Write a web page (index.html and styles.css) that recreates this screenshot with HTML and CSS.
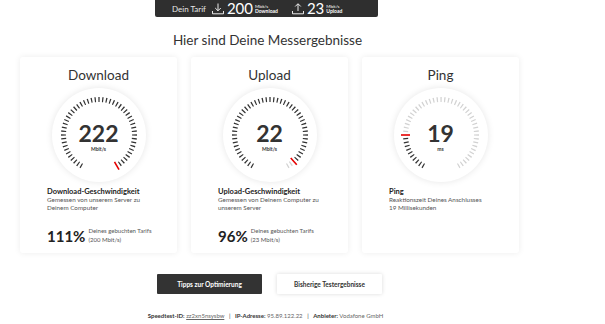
FILE: index.html
```html
<!DOCTYPE html>
<html lang="de">
<head>
    <meta charset="UTF-8">
    <meta name="viewport" content="width=device-width, initial-scale=1.0">
    <title>Speedtest Ergebnisse</title>
    <link rel="stylesheet" href="styles.css">
</head>
<body>
    <div class="page">
        <div class="tariff-bar">
            <span class="tariff-label">Dein Tarif</span>
            <svg class="tariff-icon" viewBox="0 0 14 14" width="14" height="14">
                <path d="M7 1.5v7M4.2 6l2.8 2.8L9.8 6M1.5 9v2.8h11V9" fill="none" stroke="#fff" stroke-width="0.9"/>
            </svg>
            <span class="tariff-value">200</span>
            <span class="tariff-unit"><span>Mbit/s</span><b>Download</b></span>
            <svg class="tariff-icon upload" viewBox="0 0 14 14" width="14" height="14">
                <path d="M7 9V2M4.2 4.5L7 1.7l2.8 2.8M1.5 9v2.8h11V9" fill="none" stroke="#fff" stroke-width="0.9"/>
            </svg>
            <span class="tariff-value">23</span>
            <span class="tariff-unit"><span>Mbit/s</span><b>Upload</b></span>
        </div>

        <h2 class="title">Hier sind Deine Messergebnisse</h2>

        <div class="cards">
            <div class="card">
                <h3>Download</h3>
                <div class="gauge">
                    <svg class="ticks" viewBox="0 0 94 94" width="94" height="94">
                        <path class="tick-dark" d="M29.79 78.05 A35.5 35.5 0 1 1 67.36 76.08" pathLength="296"/>
                        <line class="tick-red" x1="47" y1="16" x2="47" y2="7" transform="rotate(150 47 47)"/>
                    </svg>
                    <div class="gauge-value">222</div>
                    <div class="gauge-unit">Mbit/s</div>
                </div>
                <div class="info">
                    <div class="info-title">Download-Geschwindigkeit</div>
                    <div class="info-text">Gemessen von unserem Server zu<br>Deinem Computer</div>
                </div>
                <div class="percent">
                    <span class="percent-value">111%</span>
                    <span class="percent-text">Deines gebuchten Tarifs<br>(200 Mbit/s)</span>
                </div>
            </div>

            <div class="card">
                <h3>Upload</h3>
                <div class="gauge">
                    <svg class="ticks" viewBox="0 0 94 94" width="94" height="94">
                        <path class="tick-dark" d="M29.79 78.05 A35.5 35.5 0 1 1 72.96 71.21" pathLength="284"/>
                        <path class="tick-light" d="M68.36 75.35 A35.5 35.5 0 0 1 64.21 78.05" pathLength="8"/>
                        <line class="tick-red" x1="47" y1="16" x2="47" y2="7" transform="rotate(138 47 47)"/>
                    </svg>
                    <div class="gauge-value">22</div>
                    <div class="gauge-unit">Mbit/s</div>
                </div>
                <div class="info">
                    <div class="info-title">Upload-Geschwindigkeit</div>
                    <div class="info-text">Gemessen von Deinem Computer zu<br>unserem Server</div>
                </div>
                <div class="percent">
                    <span class="percent-value">96%</span>
                    <span class="percent-text">Deines gebuchten Tarifs<br>(23 Mbit/s)</span>
                </div>
            </div>

            <div class="card">
                <h3>Ping</h3>
                <div class="gauge">
                    <svg class="ticks" viewBox="0 0 94 94" width="94" height="94">
                        <path class="tick-dark" d="M29.79 78.05 A35.5 35.5 0 0 1 11.63 50.09" pathLength="56"/>
                        <path class="tick-light" d="M11.63 43.91 A35.5 35.5 0 1 1 64.21 78.05" pathLength="236"/>
                        <line class="tick-red" x1="47" y1="16" x2="47" y2="7" transform="rotate(-90 47 47)"/>
                    </svg>
                    <div class="gauge-value">19</div>
                    <div class="gauge-unit">ms</div>
                </div>
                <div class="info">
                    <div class="info-title">Ping</div>
                    <div class="info-text">Reaktionszeit Deines Anschlusses<br>19 Millisekunden</div>
                </div>
            </div>
        </div>

        <div class="actions">
            <button class="btn btn-dark">Tipps zur Optimierung</button>
            <button class="btn btn-light">Bisherige Testergebnisse</button>
        </div>

        <p class="meta">
            <b>Speedtest-ID:</b> <u>zz2xn5nsysbw</u>
            <span class="sep">|</span>
            <b>IP-Adresse:</b> 95.89.122.22
            <span class="sep">|</span>
            <b>Anbieter:</b> Vodafone GmbH
        </p>
    </div>
</body>
</html>
```

FILE: styles.css
```css
body {
    font-family: Lato, "Open Sans", Arial, sans-serif;
    background-color: #ffffff;
    color: #333333;
    margin: 0;
}
.page {
    width: 499px;
    margin-left: 20px;
}
.tariff-bar {
    display: flex;
    align-items: center;
    width: 223px;
    height: 17px;
    margin-left: 135px;
    padding-left: 17px;
    box-sizing: border-box;
    background-color: #2f2f2f;
    border-radius: 0 0 2px 2px;
    color: #ffffff;
}
.tariff-label {
    font-size: 8px;
    color: #e6e6e6;
    margin-right: 5px;
}
.tariff-icon {
    width: 14px;
    height: 14px;
    margin-right: 2px;
}
.tariff-icon.upload {
    margin-left: 13px;
}
.tariff-value {
    font-size: 15px;
    line-height: 17px;
    margin-right: 2px;
}
.tariff-unit {
    display: flex;
    flex-direction: column;
    font-size: 4.5px;
    line-height: 5px;
}
.tariff-unit b {
    font-size: 5px;
}
.title {
    margin: 14px 0 8px;
    font-size: 13.5px;
    line-height: 18px;
    font-weight: 400;
    text-align: center;
    padding-right: 4px;
}
.cards {
    display: grid;
    grid-template-columns: repeat(3, 157px);
    gap: 14px;
}
.card {
    height: 196px;
    box-sizing: border-box;
    padding: 9px 27px 0;
    border-radius: 3px;
    box-shadow: 0 0 6px rgba(0, 0, 0, 0.08);
}
.card h3 {
    margin: 0;
    font-size: 13.5px;
    line-height: 18px;
    font-weight: 400;
    text-align: center;
}
.gauge {
    position: relative;
    width: 94px;
    height: 94px;
    margin: 4px auto 0;
    border-radius: 50%;
    box-shadow: 0 0 7px rgba(0, 0, 0, 0.1);
    display: flex;
    flex-direction: column;
    align-items: center;
    justify-content: center;
}
.ticks {
    position: absolute;
    top: 0;
    left: 0;
}
.tick-dark,
.tick-light {
    fill: none;
    stroke-width: 5;
    stroke-dasharray: 2 4;
}
.tick-dark {
    stroke: #333333;
}
.tick-light {
    stroke: #d2d2d2;
}
.tick-red {
    stroke: #e60000;
    stroke-width: 1.6;
}
.gauge-value {
    font-size: 23px;
    line-height: 26px;
    font-weight: 700;
    margin-top: 2px;
}
.gauge-unit {
    font-size: 5px;
    font-weight: 700;
    line-height: 7px;
}
.info {
    margin-top: 5px;
}
.info-title {
    font-size: 7.5px;
    line-height: 9px;
    font-weight: 700;
    color: #222222;
}
.info-text {
    font-size: 6.3px;
    line-height: 8px;
    color: #555555;
    white-space: nowrap;
}
.percent {
    display: flex;
    align-items: flex-end;
    margin-top: 14px;
}
.percent-value {
    font-size: 15px;
    line-height: 15px;
    font-weight: 700;
    margin-right: 3px;
    color: #222222;
}
.percent-text {
    font-size: 6px;
    line-height: 9px;
    color: #555555;
    white-space: nowrap;
}
.actions {
    display: flex;
    justify-content: center;
    gap: 15px;
    margin-top: 21px;
}
.btn {
    width: 105px;
    height: 20px;
    border: none;
    border-radius: 1px;
    font-family: Lato, Arial, sans-serif;
    font-size: 6.5px;
    font-weight: 700;
    cursor: pointer;
}
.btn-dark {
    background-color: #333333;
    color: #ffffff;
}
.btn-light {
    background-color: #ffffff;
    color: #333333;
    box-shadow: 0 0 4px rgba(0, 0, 0, 0.15);
}
.meta {
    margin: 17px 0 0;
    font-size: 6px;
    line-height: 10px;
    text-align: center;
    color: #666666;
    padding-right: 8px;
}
.meta b {
    color: #333333;
}
.sep {
    margin: 0 3px;
    color: #333333;
}
```
